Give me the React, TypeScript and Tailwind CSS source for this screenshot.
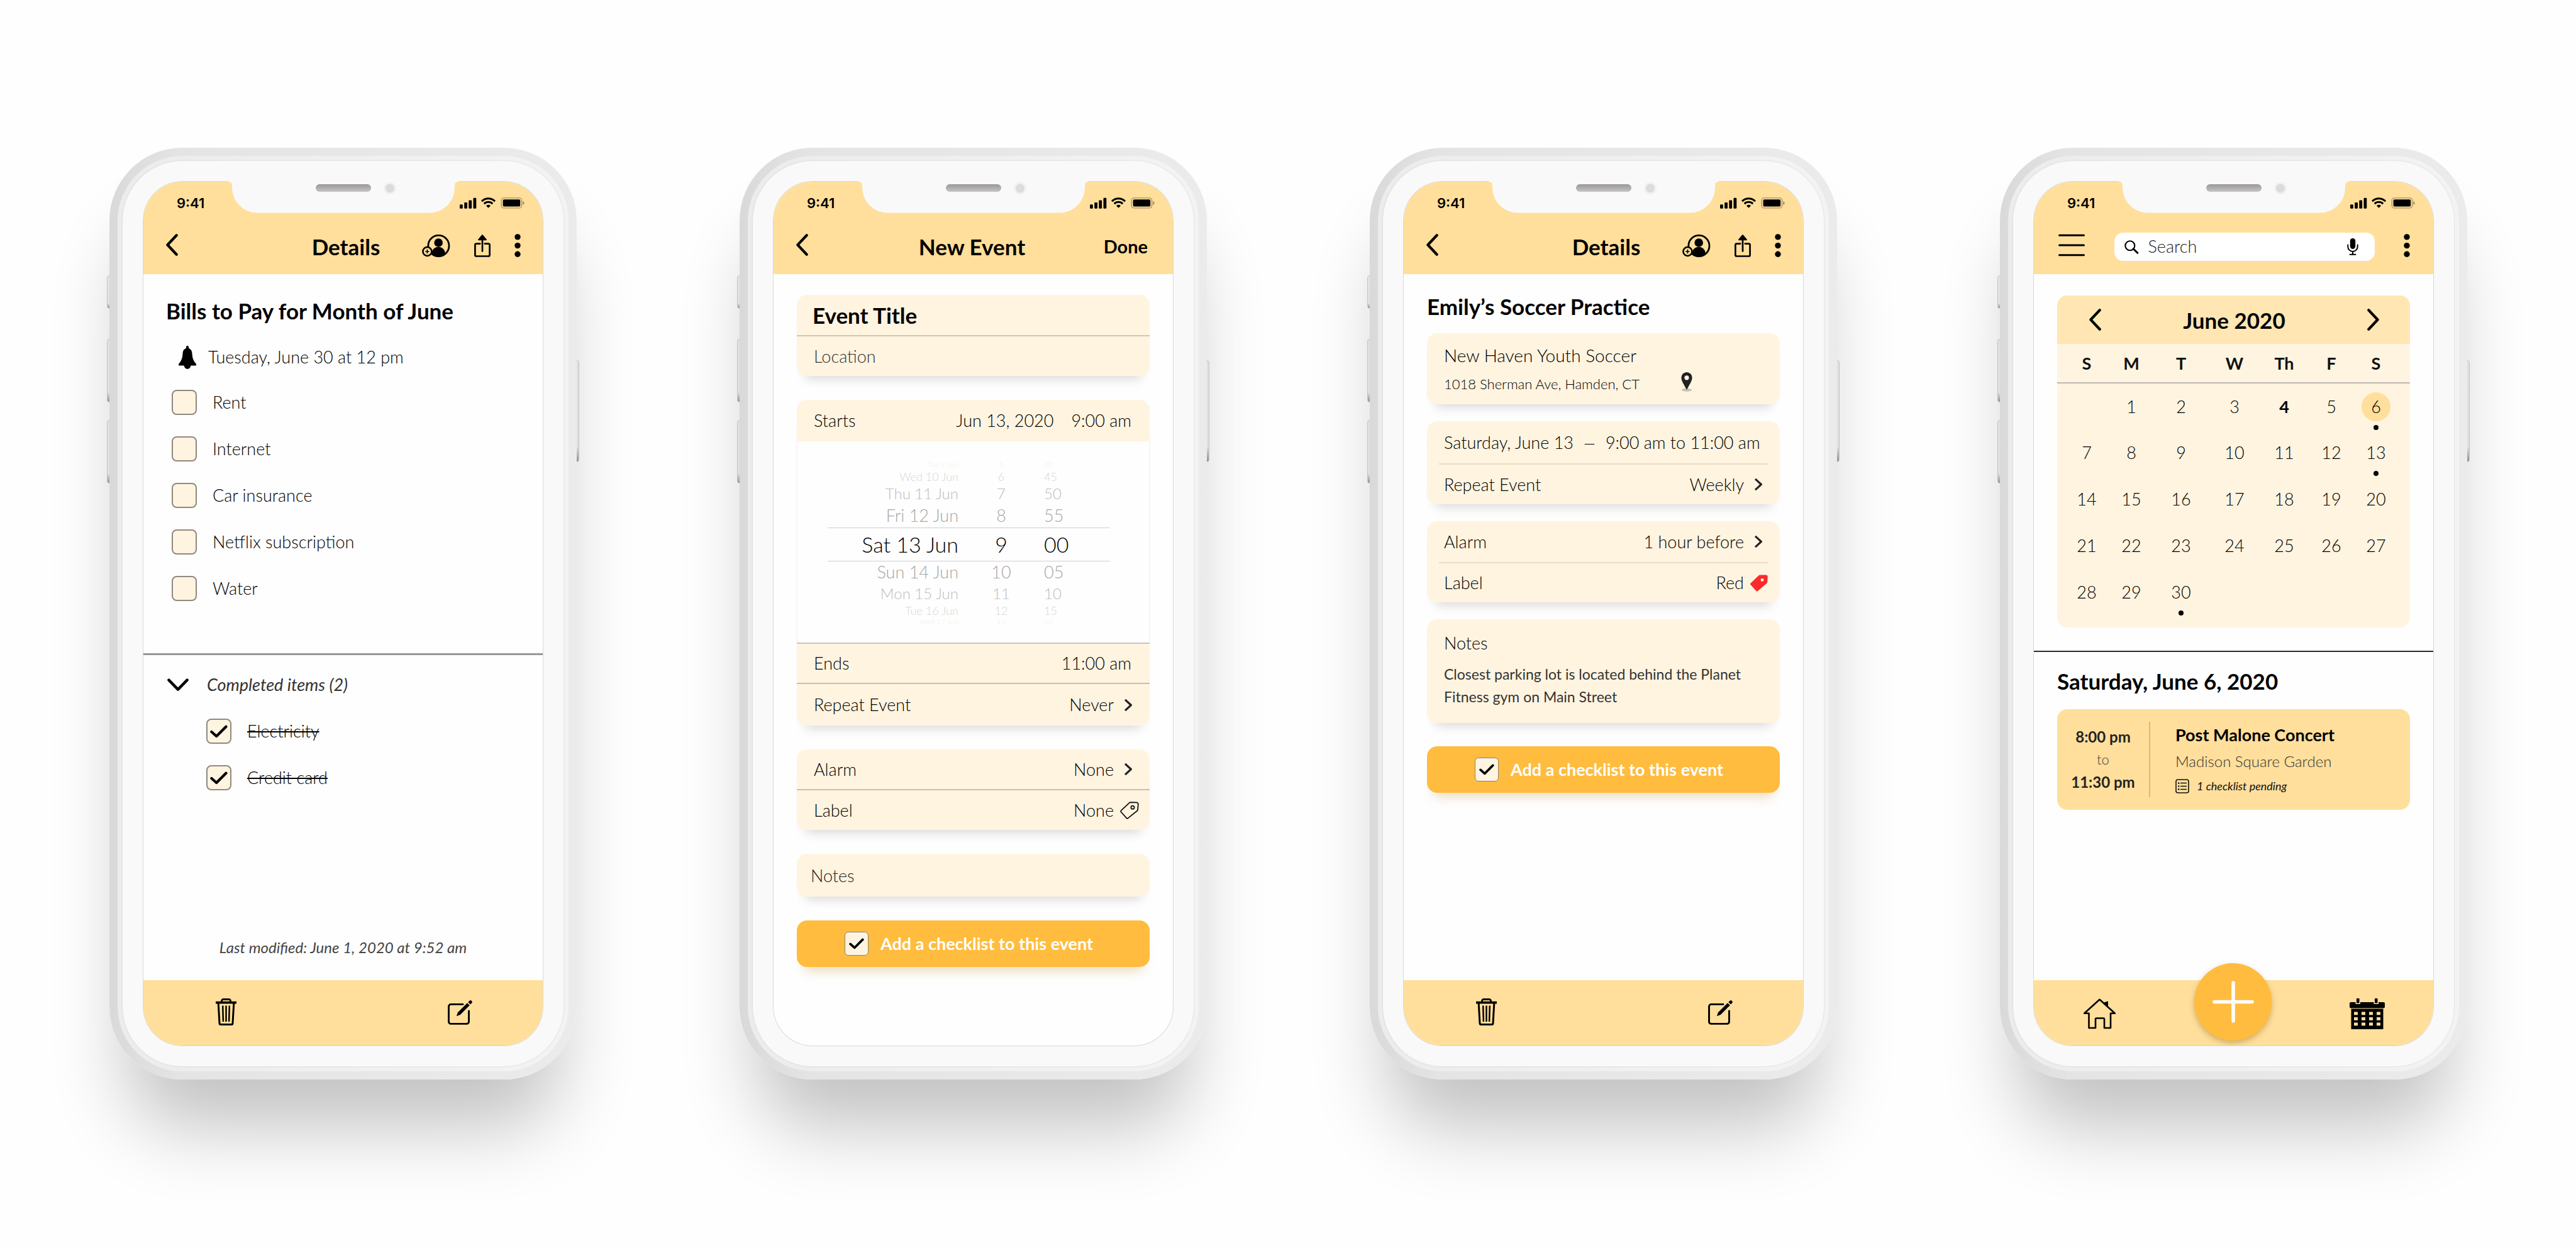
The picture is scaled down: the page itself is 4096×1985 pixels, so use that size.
import React from "react";

/* ---------- Icons ---------- */

type IconProps = { className?: string };

const BackIcon = ({ className = "" }: IconProps) => (
  <svg width="19" height="35" viewBox="0 0 19 35" className={className} fill="none" stroke="currentColor" strokeWidth="4.2" strokeLinecap="round" strokeLinejoin="round" aria-hidden="true">
    <path d="M16.7 2.3 2.4 17.5 16.7 32.7" />
  </svg>
);

const NextIcon = ({ className = "" }: IconProps) => (
  <svg width="19" height="35" viewBox="0 0 19 35" className={className} fill="none" stroke="currentColor" strokeWidth="4.2" strokeLinecap="round" strokeLinejoin="round" aria-hidden="true">
    <path d="M2.3 2.3 16.6 17.5 2.3 32.7" />
  </svg>
);

const SmallNextIcon = () => (
  <svg width="14" height="21" viewBox="0 0 14 21" fill="none" stroke="#222" strokeWidth="3.2" strokeLinejoin="round" aria-hidden="true">
    <path d="M2 1.8 11.4 10.5 2 19.2" />
  </svg>
);

const DownIcon = () => (
  <svg width="34" height="21" viewBox="0 0 34 21" fill="none" stroke="currentColor" strokeWidth="4.4" strokeLinecap="round" strokeLinejoin="round" aria-hidden="true">
    <path d="M2.4 2.6 17 17.6 31.6 2.6" />
  </svg>
);

const InviteIcon = () => (
  <svg width="45" height="36" viewBox="0 0 45 36" aria-hidden="true">
    <circle cx="26.4" cy="18" r="16.6" fill="none" stroke="#000" strokeWidth="2.8" />
    <circle cx="26.2" cy="13" r="6.8" />
    <path d="M15 31.5C15.5 24 20 19.8 26.2 19.8S36.5 24 37 30.5C34 34 30 35.5 26 35.5S18 34.5 15 31.5Z" />
    <circle cx="8.4" cy="27" r="7" fill="#ffdf9b" stroke="#000" strokeWidth="2.6" />
    <path d="M8.4 23.8v6.4M5.2 27h6.4" stroke="#000" strokeWidth="1.7" />
  </svg>
);

const ShareIcon = () => (
  <svg width="26" height="36" viewBox="0 0 26 36" fill="none" stroke="#000" strokeWidth="2.7" aria-hidden="true">
    <path d="M9.2 14.6H3.4a2 2 0 0 0-2 2v15.9a2 2 0 0 0 2 2h19.2a2 2 0 0 0 2-2V16.6a2 2 0 0 0-2-2h-5.8" strokeLinecap="round" />
    <path d="M13 7v19.5" strokeLinecap="round" />
    <path d="M13 1.2 19 8.3H7Z" fill="#000" strokeWidth="2" strokeLinejoin="round" />
  </svg>
);

const MoreIcon = () => (
  <svg width="10" height="37" viewBox="0 0 10 37" aria-hidden="true">
    <circle cx="5" cy="4.9" r="4.7" />
    <circle cx="5" cy="18.6" r="4.7" />
    <circle cx="5" cy="32.2" r="4.7" />
  </svg>
);

const BellIcon = () => (
  <svg width="30" height="37" viewBox="0 0 30 37" aria-hidden="true">
    <rect x="13" y="0" width="4" height="7" rx="1.8" />
    <path d="M15 3.8C19.5 3.8 22 7 22.4 11.5 22.9 17.5 23.3 22.5 28.6 28.6 29.8 30.3 29.2 31.6 27.6 31.6H2.4C.8 31.6.2 30.3 1.4 28.6 6.7 22.5 7.1 17.5 7.6 11.5 8 7 10.5 3.8 15 3.8Z" />
    <path d="M9.6 31h10.8c-.4 3.700-2.600 5.800-5.400 5.800S10 34.700 9.600 31Z" />
  </svg>
);

const CheckMark = ({ className = "" }: IconProps) => (
  <svg viewBox="0 0 28 21" className={className} fill="none" stroke="#000" strokeWidth="4.3" strokeLinecap="round" strokeLinejoin="round" aria-hidden="true">
    <path d="M2.4 11 10.2 18 25.4 2.8" />
  </svg>
);

const TrashIcon = () => (
  <svg width="33" height="43" viewBox="0 0 33 43" fill="none" stroke="#000" aria-hidden="true">
    <path d="M9.5 5.5V4a2.5 2.5 0 0 1 2.5-2.5h9A2.5 2.5 0 0 1 23.5 4v1.500" strokeWidth="2.8" />
    <path d="M0 6.6h33" strokeWidth="3.8" />
    <path d="M4.2 8 6 39.5a2 2 0 0 0 2 2h17a2 2 0 0 0 2-2L28.8 8" strokeWidth="3" />
    <path d="M11.2 11.5 11.9 37M16.5 11.5V37M21.8 11.5 21.1 37" strokeWidth="2.5" />
  </svg>
);

const EditIcon = () => (
  <svg width="39" height="39" viewBox="0 0 39 39" aria-hidden="true">
    <path d="M24 6.4H5a3.5 3.5 0 0 0-3.5 3.5v24A3.5 3.5 0 0 0 5 37.4h25a3.5 3.5 0 0 0 3.5-3.5V17" fill="none" stroke="#000" strokeWidth="2.9" strokeLinecap="round" />
    <path d="M13.8 25.2 16 19.2 31 4.3 34.8 8 19.8 23Z" />
    <path d="M32.3 2.9 34.3 1a2.4 2.4 0 0 1 3.7 3.5l-2 2.1Z" />
  </svg>
);

const TagOutlineIcon = () => (
  <svg width="30" height="28" viewBox="0 0 30 28" fill="none" stroke="#111" strokeWidth="1.8" strokeLinejoin="round" aria-hidden="true">
    <path d="M16.6 1.2 26 1.3A2.8 2.8 0 0 1 28.8 4.2L28.2 12.4A3 3 0 0 1 27 14.7L12.5 26.4A1.8 1.8 0 0 1 10.2 26.2L1.5 16.5A1.7 1.7 0 0 1 1.7 14.1L14.8 1.9A2.8 2.8 0 0 1 16.6 1.2Z" />
    <circle cx="20" cy="9.3" r="2.6" />
  </svg>
);

const TagRedIcon = () => (
  <svg width="28" height="27" viewBox="0 0 28 27" aria-hidden="true">
    <path d="M15.5 .5 25 .6A2.7 2.7 0 0 1 27.7 3.4L27.3 11.5A3 3 0 0 1 26 13.9L12 25.9A2 2 0 0 1 9.4 25.8L.7 16.3A2 2 0 0 1 .8 13.5L13.6 1.2A2.8 2.8 0 0 1 15.5.5Z" fill="#fb2a2a" />
    <circle cx="19" cy="8.4" r="2.4" fill="#fff4e0" />
  </svg>
);

const PinIcon = () => (
  <svg width="18" height="31" viewBox="0 0 18 31" aria-hidden="true">
    <ellipse cx="9" cy="28.3" rx="8" ry="2.5" fill="#c9bfae" />
    <path d="M9 0a8.6 8.6 0 0 1 8.6 8.7C17.6 14 13 20 9 28 5 20 .4 14 .4 8.7A8.6 8.6 0 0 1 9 0Z" fill="#222" />
    <circle cx="9" cy="8.8" r="3.6" fill="#fff4e0" />
  </svg>
);

const MenuIcon = () => (
  <svg width="42" height="36" viewBox="0 0 42 36" stroke="#000" strokeWidth="3" strokeLinecap="round" aria-hidden="true">
    <path d="M1.5 2.2h39M1.5 18h39M1.5 33.8h39" />
  </svg>
);

const SearchIcon = () => (
  <svg width="23" height="22" viewBox="0 0 23 22" fill="none" stroke="#000" strokeLinecap="round" aria-hidden="true">
    <circle cx="8.8" cy="8.8" r="7.5" strokeWidth="2.1" />
    <path d="M14.2 13.8 20.8 20.3" strokeWidth="3" />
  </svg>
);

const MicIcon = () => (
  <svg width="18" height="27" viewBox="0 0 18 27" aria-hidden="true">
    <rect x="4.8" y="0" width="8.4" height="17" rx="4.2" />
    <path d="M1.3 10.5v2.700a7.700 7.700 0 0 0 15.400 0v-2.700M9 21v5M4.500 25.800h9" fill="none" stroke="#000" strokeWidth="2" strokeLinecap="round" />
  </svg>
);

const ListIcon = () => (
  <svg width="22" height="23" viewBox="0 0 22 23" fill="none" stroke="#111" aria-hidden="true">
    <rect x="1" y="1" width="20" height="21" rx="3" strokeWidth="1.6" />
    <path d="M8 6.6h10M8 11.5h10M8 16.4h10" strokeWidth="1.5" />
    <path d="M4 6.6h2.400M4 11.500h2.400M4 16.400h2.400" strokeWidth="2.2" />
  </svg>
);

const HomeIcon = () => (
  <svg width="53" height="49" viewBox="0 0 53 49" aria-hidden="true">
    <path d="M34.5 8V6.5L39.5 5v8.500Z" stroke="#000" strokeWidth="1" />
    <path d="M2.2 23.8 26.5 1.8 50.8 23.8H44V47H34V33a1.5 1.5 0 0 0-1.5-1.5h-11A1.500 1.500 0 0 0 20 33v14H9.500V23.800Z" fill="none" stroke="#000" strokeWidth="2.6" strokeLinejoin="round" />
  </svg>
);

const cellColumns = [7, 19, 31, 43];
const cellRows = [21.5, 30, 38.5];

const CalendarIcon = () => (
  <svg width="56" height="49" viewBox="0 0 56 49" aria-hidden="true">
    <rect x="0" y="6" width="56" height="9.5" rx="2" />
    <path d="M2.500 16.500h51V49h-51Z" />
    <path d="M9.500 0h7.500v9H9.500ZM38.500 0H46v9h-7.500Z" fill="#ffdf9b" />
    <path d="M11 0h4.500v7.500H11ZM40 0h4.500v7.500H40Z" />
    {cellRows.map((y) =>
      cellColumns.map((x) => <rect key={`${x}-${y}`} x={x} y={y} width="6" height="4.8" fill="#ffdf9b" />)
    )}
  </svg>
);

const PlusIcon = () => (
  <svg width="66" height="67" viewBox="0 0 66 67" stroke="#fff" strokeWidth="5.5" strokeLinecap="round" aria-hidden="true">
    <path d="M33 3v61M3 33.500h60" />
  </svg>
);

const StatusIcons = () => (
  <svg width="104" height="18" viewBox="0 0 104 18" aria-hidden="true">
    <rect x="0" y="11.2" width="4.8" height="6.5" rx="1.2" />
    <rect x="7.2" y="8" width="4.8" height="9.7" rx="1.2" />
    <rect x="14.3" y="4.6" width="4.8" height="13.1" rx="1.2" />
    <rect x="21.5" y=".8" width="4.8" height="16.9" rx="1.2" />
    <g fill="none" stroke="#000" strokeWidth="3">
      <path d="M35 6.2a14.600 14.600 0 0 1 21 0" />
      <path d="M38.800 10.100a9.300 9.300 0 0 1 13.400 0" />
    </g>
    <path d="M42 13.200a5 5 0 0 1 7 0l-3.500 3.500Z" />
    <rect x="66.2" y=".9" width="32.4" height="16" rx="4" fill="none" stroke="#000" strokeOpacity=".35" strokeWidth="1.4" />
    <rect x="68.6" y="3.3" width="27.6" height="11.2" rx="1.8" />
    <path d="M100.400 6v6c1.800-.8 2.200-2 2.200-3s-.4-2.200-2.200-3Z" fillOpacity=".4" />
  </svg>
);

const NotchShape = () => (
  <svg width="366" height="52" viewBox="0 0 366 52" aria-hidden="true">
    <path d="M0 0H366V2C362 2 360 4 360 9V11A40 40 0 0 1 320 51.500H46A40 40 0 0 1 6 11V9C6 4 4 2 0 2Z" fill="#f9f9f9" />
    <defs>
      <linearGradient id="speaker" x1="0" y1="0" x2="0" y2="1">
        <stop offset="0" stopColor="#9b9898" />
        <stop offset="1" stopColor="#c6c3c3" />
      </linearGradient>
    </defs>
    <rect x="139" y="6" width="88" height="12" rx="6" fill="url(#speaker)" />
    <circle cx="257" cy="12.5" r="10" fill="#f1f1f1" />
    <circle cx="257" cy="12.5" r="7" fill="#dcdcdc" />
  </svg>
);

/* ---------- Phone shell ---------- */

const sideButton = "absolute w-[6px] border border-[#d0d0d0] bg-linear-to-b from-[#f2f2f2] from-85% to-[#9c9c9c]";

function Phone({ header, footer, children }: { header: React.ReactNode; footer?: React.ReactNode; children: React.ReactNode }) {
  return (
    <section className="relative">
      <span className={`${sideButton} -left-1 top-[203px] h-[53px] rounded-l-sm`} />
      <span className={`${sideButton} -left-1 top-[304px] h-[101px] rounded-l-sm`} />
      <span className={`${sideButton} -left-1 top-[433px] h-[101px] rounded-l-sm`} />
      <span className={`${sideButton} -right-1 top-[338px] h-[162px] rounded-r-sm`} />
      <div className="relative rounded-[116px] bg-linear-to-r from-[#d9d9d9] via-[#e4e4e4] via-15% to-[#ebebeb] p-[13px] shadow-[0_105px_120px_-30px_rgba(0,0,0,0.24)]">
        <div className="rounded-[103px] bg-linear-to-r from-[#ececec] to-[#f3f3f3] p-2">
          <div className="relative rounded-[95px] bg-[#f9f9f9] p-[33px] shadow-[0_0_3px_rgba(0,0,0,0.12)]">
            <div className="flex min-h-[1374px] flex-col overflow-hidden rounded-[62px] bg-[#fefefe] ring-1 ring-[#dad9d7]">
              <header className="flex h-[147px] flex-col bg-[#ffdf9b]">
                <div className="flex h-[67px] items-center justify-between pl-[53px] pr-[28px] pt-px">
                  <span className="font-['Inter',sans-serif] text-[22px] font-semibold leading-6">9:41</span>
                  <StatusIcons />
                </div>
                {header}
              </header>
              <main className="flex flex-1 flex-col">{children}</main>
              {footer}
            </div>
            <div className="absolute inset-x-0 top-[31px] flex justify-center">
              <NotchShape />
            </div>
          </div>
        </div>
      </div>
    </section>
  );
}

function DetailsHeader() {
  return (
    <div className="grid grid-cols-[1fr_auto_1fr] items-start pl-9 pr-[35px]">
      <button type="button" aria-label="Back" className="mt-4 justify-self-start">
        <BackIcon />
      </button>
      <h1 className="mt-4 pl-2 text-[35px] font-bold leading-10">Details</h1>
      <div className="mt-4 flex items-center gap-[38px] justify-self-end">
        <button type="button" aria-label="Invite people"><InviteIcon /></button>
        <button type="button" aria-label="Share"><ShareIcon /></button>
        <button type="button" aria-label="More options"><MoreIcon /></button>
      </div>
    </div>
  );
}

function DetailsFooter() {
  return (
    <footer className="flex h-[104px] items-start justify-between bg-[#ffdf9b] pl-[115px] pr-[112px] pt-[29px]">
      <button type="button" aria-label="Delete"><TrashIcon /></button>
      <button type="button" aria-label="Edit" className="mt-[3px]"><EditIcon /></button>
    </footer>
  );
}

function CheckItem({ label, done = false }: { label: string; done?: boolean }) {
  return (
    <li>
      <label className="flex items-center gap-[25px]">
        <span className="relative flex size-10 items-center justify-center">
          <input type="checkbox" defaultChecked={done} className="peer absolute inset-0 appearance-none rounded-lg border-2 border-[#8f897e] bg-[#fff4e0]" />
          <CheckMark className="relative hidden w-7 peer-checked:block" />
        </span>
        <span className={done ? "text-[27px] font-light leading-10 line-through decoration-2" : "text-[27px] font-light leading-10"}>{label}</span>
      </label>
    </li>
  );
}

const cardShadow = "shadow-[0_18px_18px_-14px_rgba(0,0,0,0.16)]";

function ChecklistButton() {
  return (
    <button type="button" className="flex h-[74px] w-full items-center gap-[19px] rounded-2xl bg-[#ffbc3e] pl-[76px] shadow-[0_18px_18px_-12px_rgba(200,150,60,0.35)]">
      <span className="flex size-[38px] items-center justify-center rounded-md border border-[#8a8375] bg-[#fff4e0]">
        <CheckMark className="w-6" />
      </span>
      <span className="text-[27px] font-bold leading-10 text-white">Add a checklist to this event</span>
    </button>
  );
}

function Row({ label, value, icon, size }: { label: string; value: string; icon: React.ReactNode; size: string }) {
  return (
    <div className={`flex items-center pl-[27px] text-[27px] font-light leading-10 ${size}`}>
      <span className="flex-1">{label}</span>
      <button type="button" aria-label={`${label}: ${value}`} className="flex items-center">
        {value}
        <span className="flex w-[57px]">{icon}</span>
      </button>
    </div>
  );
}

const chevron = <span className="ml-4"><SmallNextIcon /></span>;

/* ---------- Screens ---------- */

function BillsScreen() {
  return (
    <Phone header={<DetailsHeader />} footer={<DetailsFooter />}>
      <div className="px-9 pt-[38px]">
        <h2 className="text-[35px] font-bold leading-10">Bills to Pay for Month of June</h2>
        <div className="mt-[34px] flex items-center gap-[18px] pl-[19px]">
          <BellIcon />
          <p className="text-[27px] font-light leading-10">Tuesday, June 30 at 12 pm</p>
        </div>
        <ul className="mt-8 flex flex-col gap-[34px] pl-[9px]">
          {["Rent", "Internet", "Car insurance", "Netflix subscription", "Water"].map((item) => (
            <CheckItem key={item} label={item} />
          ))}
        </ul>
      </div>
      <hr className="mt-[83px] border-0 border-t-[3px] border-[#969696]" />
      <div className="px-[38px] pt-[27px]">
        <button type="button" className="flex items-center gap-[29px]">
          <DownIcon />
          <span className="text-[27px] italic leading-10 text-[#333]">Completed items (2)</span>
        </button>
        <ul className="mt-[34px] flex flex-col gap-[34px] pl-[62px]">
          <CheckItem label="Electricity" done />
          <CheckItem label="Credit card" done />
        </ul>
      </div>
      <p className="mt-auto pb-8 text-center text-[24px] italic leading-10 text-[#444]">Last modified: June 1, 2020 at 9:52 am</p>
    </Phone>
  );
}

const pickerRows = [
  { day: "Tue 9 Jun", hour: "5", minute: "40", style: "h-4 text-[12px] leading-4 text-[#f0f0f0]" },
  { day: "Wed 10 Jun", hour: "6", minute: "45", style: "h-[22px] text-[18px] leading-[22px] text-[#d6d6d6]" },
  { day: "Thu 11 Jun", hour: "7", minute: "50", style: "h-[32px] text-[24px] leading-8 text-[#bdbdbd]" },
  { day: "Fri 12 Jun", hour: "8", minute: "55", style: "h-[38px] text-[27px] leading-9 text-[#a6a6a6]" },
  { day: "Sat 13 Jun", hour: "9", minute: "00", style: "h-[54px] text-[34px] leading-[54px] text-black" },
  { day: "Sun 14 Jun", hour: "10", minute: "05", style: "h-[33px] text-[27px] leading-8 text-[#a6a6a6]" },
  { day: "Mon 15 Jun", hour: "11", minute: "10", style: "h-[35px] text-[24px] leading-8 text-[#bdbdbd]" },
  { day: "Tue 16 Jun", hour: "12", minute: "15", style: "h-[20px] text-[18px] leading-5 text-[#d6d6d6]" },
  { day: "Wed 17 Jun", hour: "13", minute: "20", style: "h-4 text-[12px] leading-4 text-[#f0f0f0]" },
];

function NewEventScreen() {
  return (
    <Phone
      header={
        <div className="grid grid-cols-[1fr_auto_1fr] items-start pl-9 pr-10">
          <button type="button" aria-label="Back" className="mt-4 justify-self-start">
            <BackIcon />
          </button>
          <h1 className="mt-4 text-[35px] font-bold leading-10">New Event</h1>
          <button type="button" className="mt-4 justify-self-end text-[29px] font-bold leading-10">Done</button>
        </div>
      }
    >
      <form className="flex flex-col gap-[38px] px-[37px] py-[33px]" onSubmit={(e) => e.preventDefault()}>
        <div className={`overflow-hidden rounded-2xl bg-[#fff4e0] ${cardShadow}`}>
          <input aria-label="Event title" placeholder="Event Title" className="block h-16 w-full px-[25px] text-[35px] font-bold placeholder:text-black placeholder:opacity-100" />
          <input aria-label="Location" placeholder="Location" className="block h-[65px] w-full border-t-2 border-[#cfc6b5] px-[27px] text-[27px] font-light placeholder:text-[#333] placeholder:opacity-100" />
        </div>

        <div className={`overflow-hidden rounded-2xl bg-[#fff4e0] ${cardShadow}`}>
          <div className="flex h-[66px] items-center pl-[27px] pr-[29px] text-[27px] font-light leading-10">
            <span className="flex-1">Starts</span>
            <span>Jun 13, 2020</span>
            <span className="ml-7">9:00 am</span>
          </div>
          <div className="relative h-[320px] border-x border-[#f0f0f0] bg-[#fefefe] pt-[29px] font-light">
            {pickerRows.map((row) => (
              <div key={row.day} className={`grid grid-cols-[256px_136px_1fr] items-center ${row.style}`}>
                <span className="text-right">{row.day}</span>
                <span className="text-center">{row.hour}</span>
                <span>{row.minute}</span>
              </div>
            ))}
            <span className="absolute left-12 right-[62px] top-[137px] h-[54px] border-y border-[#cfcfcf]" />
          </div>
          <div className="flex h-16 items-center border-t-2 border-[#c9c4bf] pl-[27px] pr-[29px] text-[27px] font-light leading-10">
            <span className="flex-1">Ends</span>
            <span>11:00 am</span>
          </div>
          <Row label="Repeat Event" value="Never" icon={chevron} size="h-[68px] border-t-2 border-[#c9bfb0]" />
        </div>

        <div className={`overflow-hidden rounded-2xl bg-[#fff4e0] ${cardShadow}`}>
          <Row label="Alarm" value="None" icon={chevron} size="h-[63px]" />
          <Row label="Label" value="None" icon={<span className="ml-[10px]"><TagOutlineIcon /></span>} size="h-[65px] border-t-2 border-[#c9bfb0]" />
        </div>

        <input aria-label="Notes" placeholder="Notes" className={`block h-[68px] w-full rounded-2xl bg-[#fff4e0] px-[22px] text-[27px] font-light placeholder:text-[#222] placeholder:opacity-100 ${cardShadow}`} />

        <ChecklistButton />
      </form>
    </Phone>
  );
}

function PracticeScreen() {
  return (
    <Phone header={<DetailsHeader />} footer={<DetailsFooter />}>
      <div className="px-[37px] pt-[31px]">
        <h2 className="text-[35px] font-bold leading-10">Emily’s Soccer Practice</h2>
        <div className="mt-[23px] flex flex-col gap-[27px]">
          <div className={`rounded-2xl bg-[#fff4e0] px-[27px] pb-3 pt-[15px] ${cardShadow}`}>
            <p className="text-[28px] font-light leading-10">New Haven Youth Soccer</p>
            <div className="mt-1.5 flex items-center">
              <address className="w-[377px] text-[22px] font-light not-italic leading-10">1018 Sherman Ave, Hamden, CT</address>
              <a href="#map" aria-label="Show on map" className="-mt-2">
                <PinIcon />
              </a>
            </div>
          </div>

          <div className={`rounded-2xl bg-[#fff4e0] ${cardShadow}`}>
            <p className="flex h-[67px] items-center gap-4 whitespace-nowrap pl-[27px] text-[27px] font-light leading-10">
              <span>Saturday, June 13</span>
              <span className="text-[24px]">—</span>
              <span>9:00 am to 11:00 am</span>
            </p>
            <hr className="mx-[19px] border-0 border-t-2 border-[#e8ddca]" />
            <Row label="Repeat Event" value="Weekly" icon={chevron} size="h-[63px]" />
          </div>

          <div className={`rounded-2xl bg-[#fff4e0] ${cardShadow}`}>
            <Row label="Alarm" value="1 hour before" icon={chevron} size="h-[65px]" />
            <hr className="mx-[19px] border-0 border-t-2 border-[#e8ddca]" />
            <Row label="Label" value="Red" icon={<span className="ml-[10px]"><TagRedIcon /></span>} size="h-[62px]" />
          </div>

          <div className={`rounded-2xl bg-[#fff4e0] px-[27px] pb-6 pt-[18px] ${cardShadow}`}>
            <h3 className="text-[27px] font-light leading-10">Notes</h3>
            <p className="mt-[11px] text-[23px] leading-9 text-[#333]">
              Closest parking lot is located behind the Planet
              <br />
              Fitness gym on Main Street
            </p>
          </div>
        </div>
        <div className="mt-[37px]">
          <ChecklistButton />
        </div>
      </div>
    </Phone>
  );
}

const weekDays = [
  { name: "S", width: "w-[85px] pl-[9px]" },
  { name: "M", width: "w-[66px]" },
  { name: "T", width: "w-[92px]" },
  { name: "W", width: "w-[78px]" },
  { name: "Th", width: "w-[80px]" },
  { name: "F", width: "w-[70px]" },
  { name: "S", width: "w-[90px] pr-[18px]" },
];

const weeks = [0, 1, 2, 3, 4].map((w) => weekDays.map((_, d) => w * 7 + d));
const eventDays = [6, 13, 30];

function CalendarScreen() {
  return (
    <Phone
      header={
        <div className="flex items-start justify-between pl-[39px] pr-[37px]">
          <button type="button" aria-label="Menu" className="mt-4"><MenuIcon /></button>
          <label className="mt-3.5 flex h-[45px] w-[414px] items-center rounded-[14px] bg-white pl-4 pr-[26px]">
            <SearchIcon />
            <input type="search" aria-label="Search" placeholder="Search" className="ml-[15px] min-w-0 flex-1 text-[27px] font-light placeholder:text-[#222] placeholder:opacity-100" />
            <MicIcon />
          </label>
          <button type="button" aria-label="More options" className="mt-4"><MoreIcon /></button>
        </div>
      }
      footer={
        <footer className="relative flex h-[104px] items-start justify-between bg-[#ffdf9b] pl-[78px] pr-[77px] pt-[29px]">
          <button type="button" aria-label="Home"><HomeIcon /></button>
          <button type="button" aria-label="Add event" className="-mt-14 flex size-[123px] items-center justify-center rounded-full bg-[#ffbc3e] shadow-[0_4px_10px_rgba(120,80,0,0.35)]">
            <PlusIcon />
          </button>
          <button type="button" aria-label="Calendar"><CalendarIcon /></button>
        </footer>
      }
    >
      <div className="px-[37px] pt-[34px]">
        <div className="overflow-hidden rounded-2xl bg-[#fff4e0] pb-[19px]">
          <div className="flex h-[77px] items-center justify-between bg-[#ffe6b3] pl-[51px] pr-[49px]">
            <button type="button" aria-label="Previous month"><BackIcon /></button>
            <h2 className="text-[35px] font-bold leading-10">June 2020</h2>
            <button type="button" aria-label="Next month"><NextIcon /></button>
          </div>
          <table className="w-full table-fixed border-collapse text-center text-[27px] leading-10">
            <thead>
              <tr className="h-[62px] border-b-2 border-[#bdb8b2]">
                {weekDays.map((day, i) => (
                  <th key={i} scope="col" className={`p-0 font-bold text-[#111] ${day.width}`}>{day.name}</th>
                ))}
              </tr>
            </thead>
            <tbody>
              {weeks.map((week, w) => (
                <tr key={w} className="h-[74px]">
                  {week.map((date, d) => (
                    <td key={d} className={`p-0 ${date === 4 ? "font-bold" : "font-light"} ${weekDays[d].width}`}>
                      {date > 0 && date < 31 && (
                        <span className={`relative mx-auto flex size-[46px] items-center justify-center rounded-full ${date === 6 ? "bg-[#ffdf9b]" : ""}`}>
                          {date}
                          {eventDays.includes(date) && <span className="absolute -bottom-3.5 left-[19px] size-2 rounded-full bg-black" />}
                        </span>
                      )}
                    </td>
                  ))}
                </tr>
              ))}
            </tbody>
          </table>
        </div>
      </div>
      <hr className="mt-[37px] border-0 border-t-2 border-[#2b2b2b]" />
      <div className="px-[37px] pt-[26px]">
        <h2 className="text-[35px] font-bold leading-10">Saturday, June 6, 2020</h2>
        <article className="mt-[25px] flex h-[160px] items-center rounded-2xl bg-[#ffdf9b]">
          <div className="flex h-[120px] w-[148px] flex-col items-center justify-center border-r-2 border-[#dcb977] text-center leading-9">
            <p className="text-[24px] font-bold text-[#222]">8:00 pm</p>
            <p className="text-[22px] font-light text-[#444]">to</p>
            <p className="text-[24px] font-bold text-[#222]">11:30 pm</p>
          </div>
          <div className="pl-10">
            <h3 className="text-[27px] font-bold leading-[42px]">Post Malone Concert</h3>
            <p className="text-[24px] font-light leading-[42px] text-[#333]">Madison Square Garden</p>
            <p className="flex items-center gap-3 text-[18px] italic leading-9 text-[#111]">
              <ListIcon />
              1 checklist pending
            </p>
          </div>
        </article>
      </div>
    </Phone>
  );
}

export default function App() {
  return (
    <div className="min-h-screen bg-[#fefefe] pb-[269px] pl-[174px] pr-[173px] pt-[235px] font-['Lato','Open_Sans',sans-serif] text-black">
      <div className="grid grid-cols-4 gap-x-[259px]">
        <BillsScreen />
        <NewEventScreen />
        <PracticeScreen />
        <CalendarScreen />
      </div>
    </div>
  );
}
